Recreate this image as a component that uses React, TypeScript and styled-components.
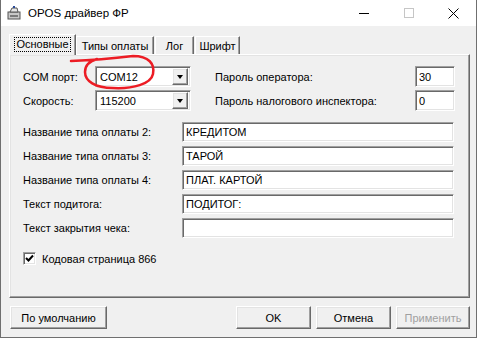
import React from "react";
import styled, { createGlobalStyle, css } from "styled-components";

const GlobalStyle = createGlobalStyle`
  html, body {
    margin: 0;
    padding: 0;
    background: #f0f0f0;
  }
  * {
    box-sizing: border-box;
  }
`;

const sunken = css`
  border: 1px solid;
  border-color: #a0a0a0 #fff #fff #a0a0a0;
  box-shadow: inset 1px 1px 0 #696969, inset -1px -1px 0 #e3e3e3;
`;

const raised = css`
  border: 1px solid;
  border-color: #fff #696969 #696969 #fff;
  box-shadow: inset -1px -1px 0 #a0a0a0, inset 1px 1px 0 #e3e3e3;
`;

const Window = styled.div`
  position: relative;
  width: 477px;
  height: 338px;
  background: #f0f0f0;
  border: 1px solid #6f6f6f;
  border-top: none;
  display: flex;
  flex-direction: column;
  font-family: "Liberation Sans", Arial, sans-serif;
  font-size: 11px;
  color: #000;
  overflow: hidden;
`;

const TitleBar = styled.div`
  height: 26px;
  background: #fff;
  display: flex;
  align-items: center;
  padding-left: 5px;
  flex-shrink: 0;
`;

const TitleText = styled.span`
  font-size: 11.5px;
  margin-left: 6px;
  color: #000;
`;

const TitleButtons = styled.div`
  margin-left: auto;
  display: flex;
  height: 100%;
`;

const TitleButton = styled.div`
  width: 45px;
  height: 100%;
  display: flex;
  align-items: center;
  justify-content: center;
`;

const Body = styled.div`
  flex: 1;
  display: flex;
  flex-direction: column;
  padding: 8px 6px 0 8px;
`;

const TabRow = styled.div`
  display: flex;
  align-items: flex-end;
  height: 20px;
  padding-left: 2px;
`;

const Tab = styled.div<{ $w: number; $active?: boolean }>`
  width: ${(p) => p.$w}px;
  height: 18px;
  border: 1px solid;
  border-color: #fff #696969 transparent #fff;
  border-bottom: none;
  box-shadow: inset -1px 0 0 #a0a0a0;
  display: flex;
  align-items: center;
  justify-content: center;
  margin-right: 1px;
  ${(p) =>
    p.$active &&
    css`
      height: 21px;
      margin: 0 0 -1px -2px;
      position: relative;
      z-index: 1;
      background: #f0f0f0;
      padding-bottom: 2px;
    `}
`;

const FocusText = styled.span`
  outline: 1px dotted #000;
  outline-offset: 0;
  padding: 0 1px;
  line-height: 13px;
`;

const Panel = styled.div`
  width: 461px;
  height: 244px;
  ${raised};
  padding: 11px 14px 0 13px;
  display: flex;
  flex-direction: column;
`;

const TopGrid = styled.div`
  display: grid;
  grid-template-columns: 72px 96px 1fr 40px;
  grid-auto-rows: 21px;
  row-gap: 3px;
  align-items: center;
`;

const Label = styled.span<{ $indent?: number }>`
  padding-left: ${(p) => p.$indent ?? 0}px;
  white-space: nowrap;
`;

const Combo = styled.div`
  height: 21px;
  ${sunken};
  background: #fff;
  display: flex;
  align-items: center;
  padding: 2px 2px 2px 4px;
`;

const ComboValue = styled.span`
  flex: 1;
`;

const ComboArrow = styled.div`
  width: 16px;
  height: 17px;
  ${raised};
  background: #f0f0f0;
  display: flex;
  align-items: center;
  justify-content: center;
`;

const Arrow = styled.div`
  width: 0;
  height: 0;
  border-left: 3.5px solid transparent;
  border-right: 3.5px solid transparent;
  border-top: 4px solid #000;
`;

const Input = styled.div<{ $h?: number }>`
  height: ${(p) => p.$h ?? 20}px;
  ${sunken};
  background: #fff;
  display: flex;
  align-items: center;
  padding-left: 3px;
  white-space: nowrap;
`;

const FieldGrid = styled.div`
  margin-top: 11px;
  display: grid;
  grid-template-columns: 159px 272px;
  grid-auto-rows: 20px;
  row-gap: 4px;
  align-items: center;
`;

const CheckRow = styled.div`
  margin-top: 14px;
  display: flex;
  align-items: center;
  gap: 6px;
`;

const CheckBox = styled.div`
  width: 13px;
  height: 13px;
  ${sunken};
  background: #fff;
  display: flex;
  align-items: center;
  justify-content: center;
`;

const ButtonRow = styled.div`
  display: flex;
  margin-top: 8px;
  padding-left: 1px;
`;

const Button = styled.div<{ $w: number; $disabled?: boolean; $gap?: number }>`
  width: ${(p) => p.$w}px;
  height: 23px;
  ${raised};
  margin-left: ${(p) => p.$gap ?? 0}px;
  display: flex;
  align-items: center;
  justify-content: center;
  color: ${(p) => (p.$disabled ? "#a0a0a0" : "#000")};
`;

const Annotation = styled.svg`
  position: absolute;
  left: 0;
  top: 0;
  pointer-events: none;
`;

const PrinterIcon = () => (
  <svg width="16" height="16" viewBox="0 0 16 16">
    <rect x="2" y="7" width="12" height="7" fill="#c8c8c8" stroke="#555" />
    <path d="M4 7 L6 3 H11 L12 7 Z" fill="#e6e6e6" stroke="#555" />
    <rect x="7" y="1" width="2" height="2" fill="#2b4c9a" />
    <rect x="4" y="10" width="8" height="2" fill="#7a7a7a" />
  </svg>
);

const fields: [string, string][] = [
  ["Название типа оплаты 2:", "КРЕДИТОМ"],
  ["Название типа оплаты 3:", "ТАРОЙ"],
  ["Название типа оплаты 4:", "ПЛАТ. КАРТОЙ"],
  ["Текст подитога:", "ПОДИТОГ:"],
  ["Текст закрытия чека:", ""],
];

const App = () => {
  return (
    <>
      <GlobalStyle />
      <Window>
        <TitleBar>
          <PrinterIcon />
          <TitleText>OPOS драйвер ФР</TitleText>
          <TitleButtons>
            <TitleButton>
              <svg width="10" height="10" viewBox="0 0 10 10">
                <path d="M0 5.5 H10" stroke="#000" strokeWidth="1" />
              </svg>
            </TitleButton>
            <TitleButton>
              <svg width="10" height="10" viewBox="0 0 10 10">
                <rect x="0.5" y="0.5" width="9" height="9" fill="none" stroke="#c6c6c6" />
              </svg>
            </TitleButton>
            <TitleButton>
              <svg width="11" height="11" viewBox="0 0 11 11">
                <path d="M0.5 0.5 L10.5 10.5 M10.5 0.5 L0.5 10.5" stroke="#000" strokeWidth="1" />
              </svg>
            </TitleButton>
          </TitleButtons>
        </TitleBar>
        <Body>
          <TabRow>
            <Tab $w={67} $active>
              <FocusText>Основные</FocusText>
            </Tab>
            <Tab $w={78}>Типы оплаты</Tab>
            <Tab $w={39}>Лог</Tab>
            <Tab $w={45}>Шрифт</Tab>
          </TabRow>
          <Panel>
            <TopGrid>
              <Label>COM порт:</Label>
              <Combo>
                <ComboValue>COM12</ComboValue>
                <ComboArrow>
                  <Arrow />
                </ComboArrow>
              </Combo>
              <Label $indent={24}>Пароль оператора:</Label>
              <Input $h={21}>30</Input>
              <Label>Скорость:</Label>
              <Combo>
                <ComboValue>115200</ComboValue>
                <ComboArrow>
                  <Arrow />
                </ComboArrow>
              </Combo>
              <Label $indent={24}>Пароль налогового инспектора:</Label>
              <Input $h={21}>0</Input>
            </TopGrid>
            <FieldGrid>
              {fields.map(([label, value]) => (
                <React.Fragment key={label}>
                  <Label>{label}</Label>
                  <Input>{value}</Input>
                </React.Fragment>
              ))}
            </FieldGrid>
            <CheckRow>
              <CheckBox>
                <svg width="9" height="9" viewBox="0 0 9 9">
                  <path d="M1 4 L3.5 6.5 L8 1.5" fill="none" stroke="#000" strokeWidth="2" />
                </svg>
              </CheckBox>
              <span>Кодовая страница 866</span>
            </CheckRow>
          </Panel>
          <ButtonRow>
            <Button $w={97}>По умолчанию</Button>
            <Button $w={75} $gap={129}>
              OK
            </Button>
            <Button $w={75} $gap={5}>
              Отмена
            </Button>
            <Button $w={74} $gap={5} $disabled>
              Применить
            </Button>
          </ButtonRow>
        </Body>
        <Annotation width="477" height="338" viewBox="0 0 477 338">
          <path
            d="M70 61 C 95 60, 115 58, 132 56 C 148 56, 154 64, 152 74 C 150 84, 132 89, 112 88 C 94 88, 84 81, 84 72 C 84 65, 89 61, 96 59"
            fill="none"
            stroke="#ec1c24"
            strokeWidth="2.5"
            strokeLinecap="round"
          />
        </Annotation>
      </Window>
    </>
  );
};

export default App;
